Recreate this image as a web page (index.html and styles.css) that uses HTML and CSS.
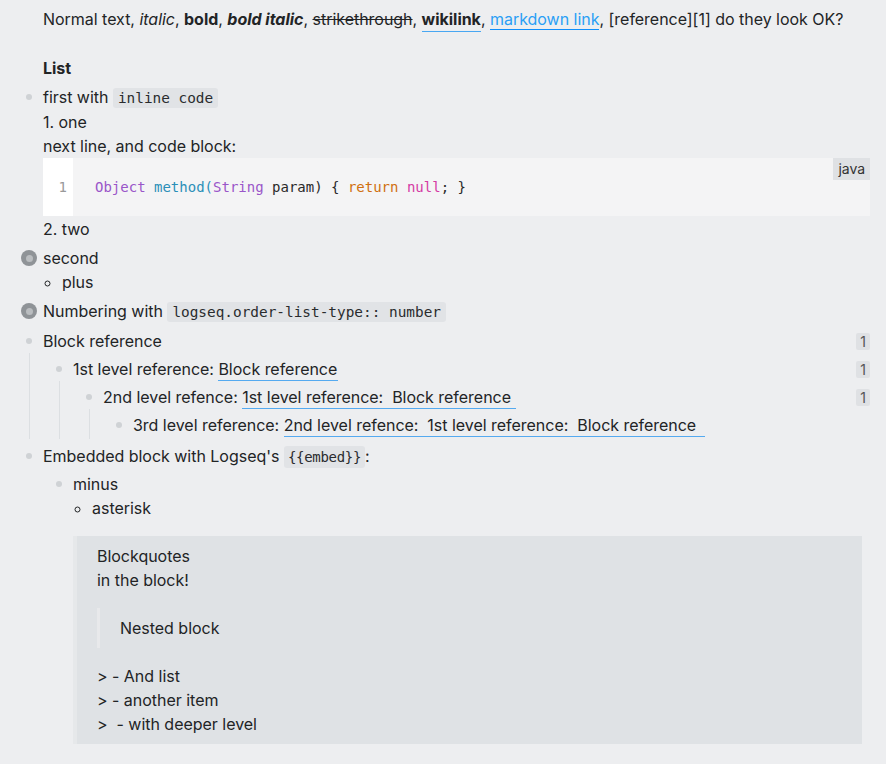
FILE: index.html
```html
<!DOCTYPE html>
<html lang="en">
<head>
<meta charset="utf-8">
<title>Logseq page</title>
<link rel="stylesheet" href="styles.css">
</head>
<body>
<div class="page">
  <div class="block block-first">
    <div class="row">
      <span class="bw"></span>
      <div class="content">Normal text, <em>italic</em>, <strong>bold</strong>, <strong><em>bold italic</em></strong>, <del>strikethrough</del>, <span class="wikilink">wikilink</span>, <span class="mdlink">markdown link</span>, [reference][1] do they look OK?</div>
    </div>
  </div>

  <div class="block block-heading">
    <div class="row">
      <span class="bw"></span>
      <div class="content"><strong>List</strong></div>
    </div>
  </div>

  <div class="block">
    <div class="row">
      <span class="bw"><span class="dot"></span></span>
      <div class="content">
        <div class="line">first with <code class="ic">inline code</code></div>
        <div class="line">1. one</div>
        <div class="line">next line, and code block:</div>
        <div class="codeblock">
          <div class="gutter">1</div>
          <pre class="code"><span class="c-type">Object</span> <span class="c-def">method(</span><span class="c-type">String</span> param) { <span class="c-kw">return</span> <span class="c-null">null</span>; }</pre>
          <span class="lang">java</span>
        </div>
        <div class="line">2. two</div>
      </div>
    </div>
  </div>

  <div class="block">
    <div class="row">
      <span class="bw"><span class="collapsed"><span class="inner"></span></span></span>
      <div class="content">
        <div class="line">second</div>
        <ul class="mdlist"><li>plus</li></ul>
      </div>
    </div>
  </div>

  <div class="block">
    <div class="row">
      <span class="bw"><span class="collapsed"><span class="inner"></span></span></span>
      <div class="content">Numbering with <code class="ic">logseq.order-list-type:: number</code></div>
    </div>
  </div>

  <div class="block block-ref-top">
    <div class="row">
      <span class="bw"><span class="dot"></span></span>
      <div class="content">Block reference</div>
      <span class="count">1</span>
    </div>
    <div class="children">
      <div class="block">
        <div class="row">
          <span class="bw"><span class="dot"></span></span>
          <div class="content">1st level reference: <span class="ref">Block reference</span></div>
          <span class="count">1</span>
        </div>
        <div class="children">
          <div class="block">
            <div class="row">
              <span class="bw"><span class="dot"></span></span>
              <div class="content">2nd level refence: <span class="ref">1st level reference:  <span class="ref">Block reference</span></span></div>
              <span class="count">1</span>
            </div>
            <div class="children">
              <div class="block">
                <div class="row row-deep">
                  <span class="bw"><span class="dot"></span></span>
                  <div class="content">3rd level reference: <span class="ref">2nd level refence:  <span class="ref">1st level reference:  <span class="ref">Block reference</span></span></span></div>
                </div>
              </div>
            </div>
          </div>
        </div>
      </div>
    </div>
  </div>

  <div class="block">
    <div class="row">
      <span class="bw"><span class="dot"></span></span>
      <div class="content">Embedded block with Logseq's <code class="ic ic-embed">{{embed}}</code>:</div>
    </div>
    <div class="children children-plain">
      <div class="block">
        <div class="row">
          <span class="bw"><span class="dot"></span></span>
          <div class="content">
            <div class="line">minus</div>
            <ul class="mdlist"><li>asterisk</li></ul>
            <blockquote class="quote">
              <div class="line">Blockquotes</div>
              <div class="line">in the block!</div>
              <blockquote class="quote-nested">
                <div class="line">Nested block</div>
              </blockquote>
              <div class="line">&gt; - And list</div>
              <div class="line">&gt; - another item</div>
              <div class="line">&gt;&nbsp; - with deeper level</div>
            </blockquote>
          </div>
        </div>
      </div>
    </div>
  </div>
</div>
</body>
</html>
```
FILE: styles.css
```css
html, body {
  margin: 0;
  padding: 0;
  background: #edeef0;
}
body {
  font-family: Inter, "Noto Sans", sans-serif;
  font-size: 16px;
  line-height: 24px;
  letter-spacing: -0.025px;
  color: #222426;
}
.page {
  padding: 7px 16px 20px 15px;
}
.block {
  margin-top: 5px;
}
.block-first {
  margin-top: 0;
}
.block-heading {
  margin-top: 25px;
}
.block-ref-top {
  margin-top: 5px;
}
.row {
  display: flex;
  align-items: flex-start;
}
.row-deep {
  padding-bottom: 2px;
}
.bw {
  flex: 0 0 28px;
  width: 28px;
  height: 24px;
  display: flex;
  align-items: center;
  justify-content: center;
}
.dot {
  width: 6px;
  height: 6px;
  border-radius: 50%;
  background: #cfd2d5;
}
.collapsed {
  width: 16px;
  height: 16px;
  border-radius: 50%;
  background: #8f9397;
  display: flex;
  align-items: center;
  justify-content: center;
}
.collapsed .inner {
  width: 7px;
  height: 7px;
  border-radius: 50%;
  background: #babdc0;
}
.content {
  flex: 1 1 auto;
  min-width: 0;
}
.children {
  margin-left: 14px;
  border-left: 1px solid #dcdfe2;
  padding-left: 15px;
  padding-top: 2px;
}
.children > .block {
  margin-top: 2px;
}
.children-plain {
  border-left-color: transparent;
  padding-top: 3px;
}
.children-plain > .block {
  margin-top: 0;
}
.count {
  flex: 0 0 auto;
  margin-top: 4px;
  height: 17px;
  line-height: 17px;
  padding: 0 4px;
  font-size: 14px;
  color: #555;
  background: #dfe1e4;
  border-radius: 2px;
}
em { font-style: italic; }
strong { font-weight: 700; }
del { text-decoration: line-through; }
.wikilink {
  font-weight: 700;
  border-bottom: 1px solid #49a7f2;
  padding-bottom: 2px;
}
.mdlink {
  color: #2a9ff5;
  border-bottom: 1px solid #0f8ffb;
}
.ref {
  border-bottom: 1px solid #55aaf0;
  padding: 0 1px 1px 0;
  white-space: pre;
}
.ref .ref {
  border-bottom: none;
  padding: 0 4px 0 0;
}
.ic {
  font-family: "DejaVu Sans Mono", "Liberation Mono", monospace;
  font-size: 14.4px;
  letter-spacing: 0;
  background: #e1e3e6;
  color: #2a2c2e;
  padding: 2px 5px;
  border-radius: 3px;
}
.ic-embed {
  font-size: 14px;
  letter-spacing: -0.3px;
  padding: 3px 4px;
}
.codeblock {
  position: relative;
  display: flex;
  margin: 0 0 1px 0;
  height: 58px;
  background: #f4f4f5;
}
.gutter {
  width: 30px;
  background: #ffffff;
  text-align: right;
  box-sizing: border-box;
  padding-right: 6px;
  line-height: 58px;
  font-family: "DejaVu Sans Mono", monospace;
  font-size: 14px;
  letter-spacing: 0;
  color: #999;
}
.code {
  margin: 0;
  padding-left: 22px;
  line-height: 58px;
  font-family: "DejaVu Sans Mono", monospace;
  font-size: 14px;
  letter-spacing: 0;
  color: #2a2a2a;
}
.c-type { color: #9a56c9; }
.c-def { color: #2b8fb8; }
.c-kw { color: #d0700f; }
.c-null { color: #d43aa4; }
.lang {
  position: absolute;
  top: 0;
  right: 0;
  height: 22px;
  line-height: 22px;
  padding: 0 5px;
  font-size: 14px;
  background: #dfe1e4;
  color: #333;
}
.mdlist {
  margin: 0;
  padding-left: 19px;
  list-style: circle;
}
.quote {
  margin: 16px 8px 0 0;
  padding: 8px 20px;
  background: #dfe2e5;
  border-left: 4px solid #e6e8ea;
}
.quote-nested {
  margin: 16px 0;
  padding: 8px 20px;
  border-left: 3px solid #e8e9eb;
}
```
